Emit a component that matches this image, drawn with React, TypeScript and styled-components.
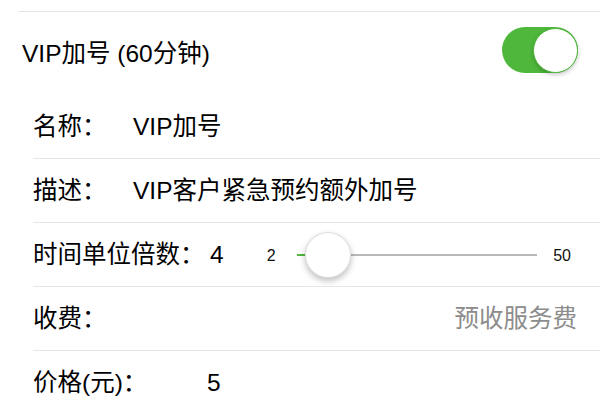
import styled, { createGlobalStyle } from "styled-components";

const GlobalStyle = createGlobalStyle`
  html, body {
    margin: 0;
    padding: 0;
    background: #ffffff;
  }
  body {
    font-family: "Liberation Sans", "Noto Sans CJK SC", sans-serif;
    color: #000000;
    -webkit-font-smoothing: antialiased;
  }
`;

const SLIDER_MIN = 2;
const SLIDER_MAX = 50;
const SLIDER_VALUE = 4;
const KNOB_SIZE = 46;

export default function App() {
  const fraction = (SLIDER_VALUE - SLIDER_MIN) / (SLIDER_MAX - SLIDER_MIN);

  return (
    <>
      <GlobalStyle />
      <Page>
        <TopRule />
        <HeadRow>
          <HeadTitle>VIP加号 (60分钟)</HeadTitle>
          <Toggle $on>
            <ToggleKnob />
          </Toggle>
        </HeadRow>

        <List>
          <Row>
            <Label $width={100}>名称：</Label>
            <Value>VIP加号</Value>
          </Row>
          <Row>
            <Label $width={100}>描述：</Label>
            <Value>VIP客户紧急预约额外加号</Value>
          </Row>
          <Row>
            <Label $width={177}>时间单位倍数：</Label>
            <Value>{SLIDER_VALUE}</Value>
            <Slider>
              <SliderEnd>{SLIDER_MIN}</SliderEnd>
              <Track>
                <TrackFill
                  style={{
                    width: `calc(${KNOB_SIZE / 2}px + (100% - ${KNOB_SIZE}px) * ${fraction})`,
                  }}
                />
                <Knob
                  style={{
                    left: `calc((100% - ${KNOB_SIZE}px) * ${fraction})`,
                  }}
                />
              </Track>
              <SliderEnd>{SLIDER_MAX}</SliderEnd>
            </Slider>
          </Row>
          <Row>
            <Label $width={100}>收费：</Label>
            <Hint>预收服务费</Hint>
          </Row>
          <Row $last>
            <Label $width={174}>价格(元)：</Label>
            <Value>5</Value>
          </Row>
        </List>
      </Page>
    </>
  );
}

const Page = styled.div`
  width: 600px;
  height: 412px;
  overflow: hidden;
  padding-top: 11px;
  box-sizing: border-box;
`;

const TopRule = styled.div`
  height: 1px;
  margin-left: 19px;
  background: #e4e4e4;
`;

const HeadRow = styled.div`
  display: flex;
  align-items: center;
  justify-content: space-between;
  height: 82px;
  padding: 0 22px 0 22px;
`;

const HeadTitle = styled.div`
  font-size: 24.5px;
  line-height: 1.2;
  margin-top: 1px;
`;

const Toggle = styled.div<{ $on?: boolean }>`
  position: relative;
  width: 76px;
  height: 46px;
  border-radius: 23px;
  background: ${(p) => (p.$on ? "#4fb83c" : "#e5e5e5")};
  margin-bottom: 6px;
  display: flex;
  justify-content: ${(p) => (p.$on ? "flex-end" : "flex-start")};
  align-items: center;
`;

const ToggleKnob = styled.div`
  width: 45px;
  height: 45px;
  border-radius: 50%;
  background: #ffffff;
  box-sizing: border-box;
  border: 1px solid #4fb83c;
  box-shadow: 0 2px 4px rgba(0, 0, 0, 0.22);
  margin-right: 0.5px;
`;

const List = styled.div`
  margin-left: 33px;
  margin-top: 1px;
`;

const Row = styled.div<{ $last?: boolean }>`
  display: flex;
  align-items: center;
  height: 63px;
  border-bottom: ${(p) => (p.$last ? "none" : "1px solid #e6e6e6")};
  padding-right: 23px;
`;

const Label = styled.div<{ $width: number }>`
  width: ${(p) => p.$width}px;
  flex-shrink: 0;
  font-size: 24.5px;
  line-height: 1.2;
  white-space: nowrap;
`;

const Value = styled.div`
  font-size: 24.5px;
  line-height: 1.2;
  white-space: nowrap;
`;

const Hint = styled.div`
  margin-left: auto;
  font-size: 24.5px;
  line-height: 1.2;
  color: #8c8c8c;
`;

const Slider = styled.div`
  flex: 1;
  display: flex;
  align-items: center;
  margin-left: 43px;
  padding-right: 6px;
`;

const SliderEnd = styled.div`
  font-size: 16px;
  line-height: 1;
  color: #111111;
  margin-top: 3px;
`;

const Track = styled.div`
  position: relative;
  flex: 1;
  height: 2px;
  margin: 0 16px 0 21px;
  background: #b8b8b8;
`;

const TrackFill = styled.div`
  position: absolute;
  left: 0;
  top: 0;
  height: 2px;
  background: #4fb83c;
`;

const Knob = styled.div`
  position: absolute;
  top: 50%;
  width: ${KNOB_SIZE}px;
  height: ${KNOB_SIZE}px;
  margin-top: -${KNOB_SIZE / 2}px;
  border-radius: 50%;
  background: #ffffff;
  box-sizing: border-box;
  border: 0.5px solid rgba(0, 0, 0, 0.12);
  box-shadow: 0 3px 6px rgba(0, 0, 0, 0.25);
`;
